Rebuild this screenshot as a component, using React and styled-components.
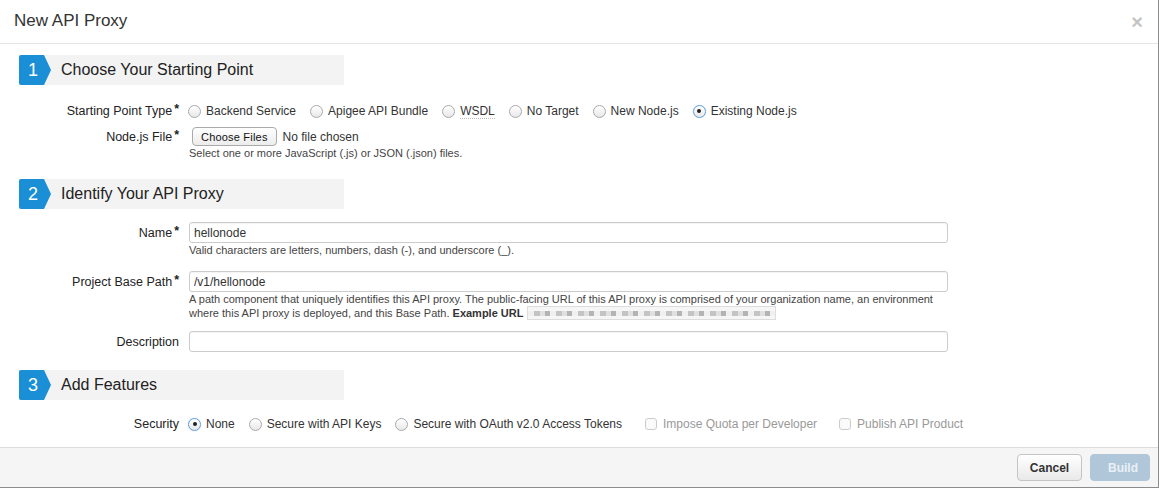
import React from 'react'
import styled, { createGlobalStyle } from 'styled-components'

const GlobalStyle = createGlobalStyle`
  html, body {
    margin: 0;
    padding: 0;
    background: #fff;
  }
  body {
    font-family: 'Liberation Sans', Arial, sans-serif;
    font-size: 12px;
    color: #333;
  }
`

const App = () => {
  return (
    <Modal>
      <GlobalStyle />
      <ModalHeader>
        <ModalTitle>New API Proxy</ModalTitle>
        <Close>×</Close>
      </ModalHeader>

      <ModalBody>
        {/* Step 1 */}
        <StepHeader>
          <StepNumber>1</StepNumber>
          <StepTitle>Choose Your Starting Point</StepTitle>
        </StepHeader>
        <Row $top={16}>
          <Label>
            Starting Point Type<Star>*</Star>
          </Label>
          <Options>
            <Option>
              <Radio />
              Backend Service
            </Option>
            <Option>
              <Radio />
              Apigee API Bundle
            </Option>
            <Option>
              <Radio />
              <Dotted>WSDL</Dotted>
            </Option>
            <Option>
              <Radio />
              No Target
            </Option>
            <Option>
              <Radio />
              New Node.js
            </Option>
            <Option>
              <Radio $checked />
              Existing Node.js
            </Option>
          </Options>
        </Row>
        <Row $top={6}>
          <Label>
            Node.js File<Star>*</Star>
          </Label>
          <Field>
            <FileLine>
              <FileButton>Choose Files</FileButton>
              <span>No file chosen</span>
            </FileLine>
            <Help>Select one or more JavaScript (.js) or JSON (.json) files.</Help>
          </Field>
        </Row>

        {/* Step 2 */}
        <StepHeader $top={19}>
          <StepNumber>2</StepNumber>
          <StepTitle>Identify Your API Proxy</StepTitle>
        </StepHeader>
        <Row $top={13}>
          <Label $input>
            Name<Star>*</Star>
          </Label>
          <Field>
            <Input defaultValue="hellonode" />
            <Help>
              Valid characters are letters, numbers, dash (-), and underscore
              (_).
            </Help>
          </Field>
        </Row>
        <Row $top={14}>
          <Label $input>
            Project Base Path<Star>*</Star>
          </Label>
          <Field>
            <Input defaultValue="/v1/hellonode" />
            <Help>
              A path component that uniquely identifies this API proxy. The
              public-facing URL of this API proxy is comprised of your
              organization name, an environment
              <br />
              where this API proxy is deployed, and this Base Path.{' '}
              <strong>Example URL</strong> <Blurred />
            </Help>
          </Field>
        </Row>
        <Row $top={11}>
          <Label $input>Description</Label>
          <Field>
            <Input />
          </Field>
        </Row>

        {/* Step 3 */}
        <StepHeader $top={18}>
          <StepNumber>3</StepNumber>
          <StepTitle>Add Features</StepTitle>
        </StepHeader>
        <Row $top={14}>
          <Label>Security</Label>
          <Options>
            <Option>
              <Radio $checked />
              None
            </Option>
            <Option>
              <Radio />
              Secure with API Keys
            </Option>
            <Option $gap={23}>
              <Radio />
              Secure with OAuth v2.0 Access Tokens
            </Option>
            <Option $disabled $gap={22}>
              <Checkbox />
              Impose Quota per Developer
            </Option>
            <Option $disabled>
              <Checkbox />
              Publish API Product
            </Option>
          </Options>
        </Row>
      </ModalBody>

      <Footer>
        <Button>Cancel</Button>
        <Button $primary disabled>
          Build
        </Button>
      </Footer>
    </Modal>
  )
}

const Modal = styled.div`
  width: 1159px;
  height: 488px;
  box-sizing: border-box;
  display: flex;
  flex-direction: column;
  border-right: 1px solid #8c8c8c;
  border-bottom: 1px solid #8c8c8c;
  background: #fff;
  overflow: hidden;
`
const ModalHeader = styled.div`
  height: 44px;
  flex: none;
  box-sizing: border-box;
  display: flex;
  align-items: center;
  justify-content: space-between;
  padding: 0 14px 2px 14px;
  border-bottom: 1px solid #e5e5e5;
`
const ModalTitle = styled.h3`
  margin: 0;
  font-family: 'Liberation Sans', Arial, sans-serif;
  font-weight: normal;
  font-size: 17px;
  color: #333;
`
const Close = styled.span`
  font-size: 20px;
  font-weight: bold;
  color: #c4c4c4;
  line-height: 1;
  margin-right: 1px;
  margin-top: 2px;
`
const ModalBody = styled.div`
  flex: 1;
  padding-top: 11px;
`
const StepHeader = styled.div`
  display: flex;
  align-items: center;
  margin-left: 19px;
  margin-top: ${(p) => p.$top || 0}px;
  width: 325px;
  height: 30px;
  background: #f3f3f3;
`
const StepNumber = styled.div`
  width: 32px;
  height: 30px;
  box-sizing: border-box;
  padding-left: 9px;
  display: flex;
  align-items: center;
  color: #fff;
  font-size: 18px;
  background: #1b8fd5;
  border-radius: 2px 0 0 2px;
  clip-path: polygon(0 0, 25px 0, 32px 50%, 25px 100%, 0 100%);
`
const StepTitle = styled.div`
  margin-left: 10px;
  font-size: 16px;
  color: #222;
`
const Row = styled.div`
  display: grid;
  grid-template-columns: 180px 1fr;
  column-gap: 9px;
  margin-top: ${(p) => p.$top || 0}px;
`
const Label = styled.div`
  text-align: right;
  color: #222;
  font-size: 12.5px;
  line-height: 20px;
  white-space: nowrap;
  padding-right: 1px;
  ${(p) => p.$input && 'padding-top: 1px;'}
`
const Star = styled.span`
  font-weight: bold;
  margin-left: 2px;
  position: relative;
  top: -2px;
`
const Options = styled.div`
  display: flex;
  align-items: center;
  height: 20px;
  margin-left: -1px;
`
const Option = styled.label`
  display: flex;
  align-items: center;
  gap: 5px;
  margin-right: ${(p) => p.$gap || 14}px;
  font-size: 12px;
  white-space: nowrap;
  color: ${(p) => (p.$disabled ? '#999' : '#333')};
`
const Radio = styled.span`
  position: relative;
  width: 13px;
  height: 13px;
  box-sizing: border-box;
  border-radius: 50%;
  border: 1px solid ${(p) => (p.$checked ? '#6a9fd8' : '#aaa')};
  background: linear-gradient(#fff, #e8e8e8);
  box-shadow: ${(p) => (p.$checked ? '0 0 1px #8ab8ea' : 'none')};
  &::after {
    content: '';
    display: ${(p) => (p.$checked ? 'block' : 'none')};
    position: absolute;
    left: 3.5px;
    top: 3.5px;
    width: 4px;
    height: 4px;
    border-radius: 50%;
    background: #222;
  }
`
const Checkbox = styled.span`
  width: 12px;
  height: 12px;
  box-sizing: border-box;
  border-radius: 3px;
  border: 1px solid #ccc;
  background: #fafafa;
  margin-right: 1px;
`
const Dotted = styled.span`
  border-bottom: 1px dotted #bbb;
`
const Field = styled.div`
  display: flex;
  flex-direction: column;
  width: 759px;
`
const FileLine = styled.div`
  display: flex;
  align-items: center;
  gap: 6px;
  height: 19px;
  padding-left: 3px;
  font-size: 12px;
`
const FileButton = styled.span`
  height: 19px;
  box-sizing: border-box;
  padding: 0 8px;
  display: flex;
  align-items: center;
  border: 1px solid #aaa;
  border-radius: 4px;
  background: linear-gradient(#fff, #ececec);
  color: #111;
  font-size: 11px;
  letter-spacing: 0.2px;
`
const Help = styled.div`
  font-size: 11px;
  line-height: 14px;
  color: #444;
  strong {
    color: #333;
  }
`
const Blurred = styled.span`
  display: inline-block;
  vertical-align: middle;
  width: 249px;
  height: 14px;
  margin-top: -2px;
  border: 1px solid #ddd;
  box-sizing: border-box;
  background: repeating-linear-gradient(
    90deg,
    #f0f0f0 0 6px,
    #c4c4c4 6px 12px,
    #e0e0e0 12px 17px,
    #b4b4b4 17px 22px
  );
  background-size: 100% 5px;
  background-position: 0 4px;
  background-repeat: no-repeat;
  background-color: #f6f6f6;
`
const Input = styled.input`
  width: 759px;
  height: 21px;
  box-sizing: border-box;
  border: 1px solid #ccc;
  border-radius: 3px;
  padding: 0 4px;
  font-family: 'Liberation Sans', Arial, sans-serif;
  font-size: 12px;
  color: #333;
  outline: none;
  box-shadow: inset 0 1px 1px rgba(0, 0, 0, 0.05);
`
const Footer = styled.div`
  height: 40px;
  flex: none;
  box-sizing: border-box;
  border-top: 1px solid #ddd;
  background: #f5f5f5;
  display: flex;
  align-items: center;
  justify-content: flex-end;
  gap: 8px;
  padding: 0 8px 0 0;
`
const Button = styled.button`
  height: 27px;
  box-sizing: border-box;
  padding: 0 ${(p) => (p.$primary ? 17 : 11)}px;
  border-radius: 4px;
  font-family: 'Liberation Sans', Arial, sans-serif;
  font-size: 12px;
  font-weight: bold;
  border: 1px solid ${(p) => (p.$primary ? '#b0c7d9' : '#c5c5c5')};
  color: ${(p) => (p.$primary ? '#e8f0f6' : '#333')};
  background: ${(p) =>
    p.$primary ? '#b0c7d9' : 'linear-gradient(#fff, #e9e9e9)'};
  width: ${(p) => (p.$primary ? 60 : 65)}px;
`

export default App
